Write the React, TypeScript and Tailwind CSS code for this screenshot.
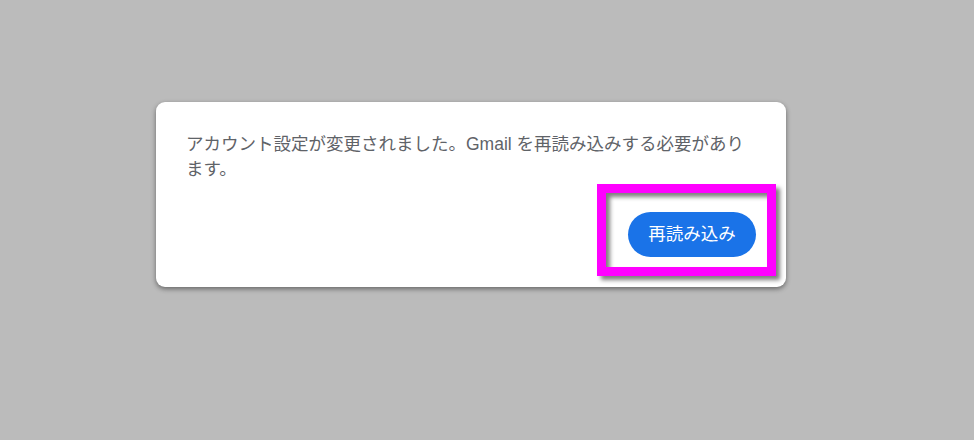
export default function App() {
  return (
    <div
      className="min-h-[440px] w-full bg-[#bbbbbb] pl-[156px] pt-[102px]"
      style={{ fontFamily: '"Liberation Sans", "Noto Sans CJK JP", sans-serif' }}
    >
      {/* Dialog */}
      <div className="w-[630px] rounded-[9px] bg-white p-[30px] shadow-[0_2px_5px_rgba(0,0,0,0.45)]">
        <p className="text-[17.5px] leading-[25px] text-[#5f6368]">
          アカウント設定が変更されました。Gmail を再読み込みする必要があり
          <br />
          ます。
        </p>

        {/* Actions */}
        <div className="mt-[30px] flex justify-end">
          <div className="relative">
            <button className="h-[45px] w-[128px] rounded-full bg-[#1a73e8] text-[17.5px] text-white">
              再読み込み
            </button>

            {/* Highlight */}
            <div className="pointer-events-none absolute left-[-31px] top-[-28px] h-[92px] w-[179px] border-[9px] border-[#ff00ff] drop-shadow-[4px_4px_2px_rgba(0,0,0,0.5)]" />
          </div>
        </div>
      </div>
    </div>
  );
}
